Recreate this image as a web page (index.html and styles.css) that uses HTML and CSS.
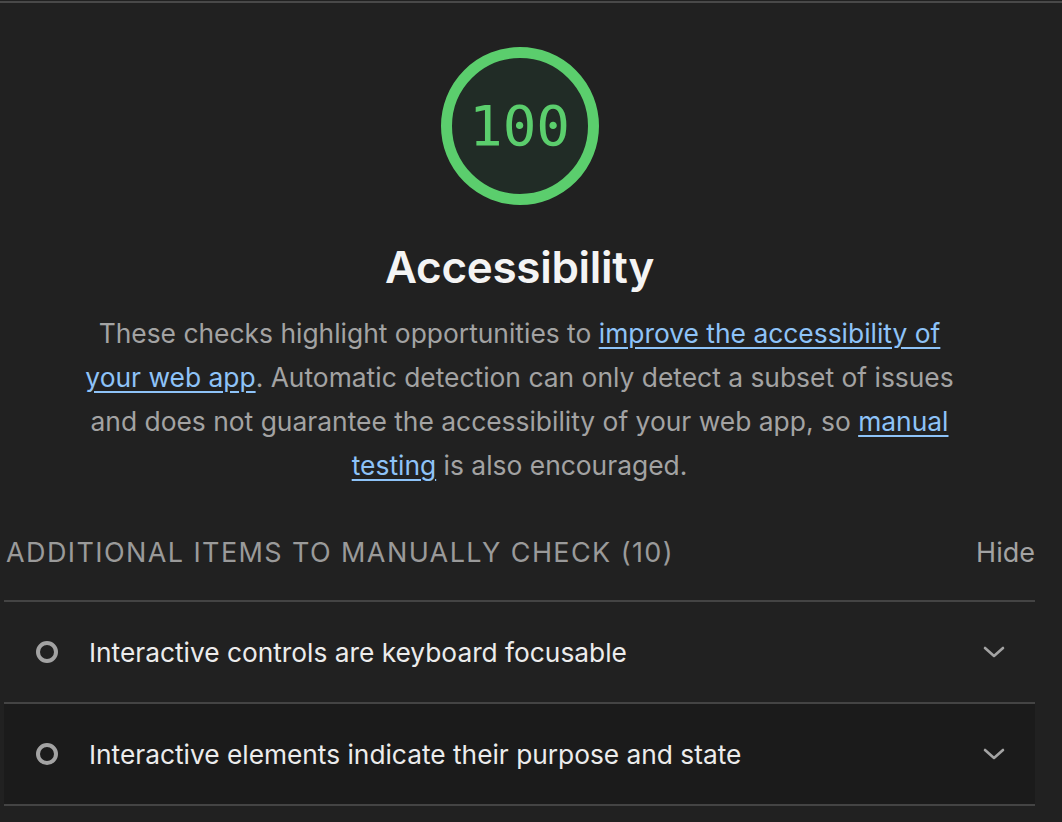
FILE: index.html
```html
<!DOCTYPE html>
<html lang="en">
<head>
<meta charset="utf-8">
<title>Accessibility</title>
<link rel="stylesheet" href="styles.css">
</head>
<body>
<div class="topline"></div>
<main class="category">
  <div class="gauge-wrap">
    <div class="gauge"><span class="gauge-value">100</span></div>
  </div>
  <h1 class="title">Accessibility</h1>
  <p class="desc">These checks highlight opportunities to <a href="#">improve the accessibility of your web app</a>. Automatic detection can only detect a subset of issues and does not guarantee the accessibility of your web app, so <a href="#">manual testing</a> is also encouraged.</p>
  <div class="group-head">
    <span class="group-title">Additional items to manually check (10)</span>
    <span class="group-toggle">Hide</span>
  </div>
  <div class="audits">
    <div class="audit">
      <span class="audit-icon"></span>
      <span class="audit-text">Interactive controls are keyboard focusable</span>
      <svg class="chev" width="22" height="12" viewBox="0 0 22 12"><path d="M2 2 L11 10 L20 2" fill="none" stroke="#a3a3a3" stroke-width="2.6" stroke-linecap="round" stroke-linejoin="round"/></svg>
    </div>
    <div class="audit alt">
      <span class="audit-icon"></span>
      <span class="audit-text">Interactive elements indicate their purpose and state</span>
      <svg class="chev" width="22" height="12" viewBox="0 0 22 12"><path d="M2 2 L11 10 L20 2" fill="none" stroke="#a3a3a3" stroke-width="2.6" stroke-linecap="round" stroke-linejoin="round"/></svg>
    </div>
  </div>
</main>
</body>
</html>
```
FILE: styles.css
```css
html, body {
  margin: 0;
  padding: 0;
  background: #212121;
  height: 100%;
  overflow: hidden;
}
body {
  font-family: Inter, "Noto Sans", sans-serif;
  padding-top: 1px;
}
.topline {
  height: 2px;
  background: #494949;
}
.category {
  width: 1031px;
  margin-left: 4px;
  display: flex;
  flex-direction: column;
  align-items: center;
}
.gauge-wrap {
  padding-top: 44px;
}
.gauge {
  width: 136px;
  height: 136px;
  border: 11px solid #5bce6d;
  border-radius: 50%;
  background: #212c26;
  display: flex;
  align-items: center;
  justify-content: center;
}
.gauge-value {
  font-family: "DejaVu Sans Mono", monospace;
  font-size: 56px;
  color: #5bce6d;
  line-height: 1;
}
.title {
  margin: 35px 0 0;
  font-size: 44px;
  font-weight: 600;
  color: #f4f4f4;
  line-height: 54px;
  letter-spacing: -0.3px;
}
.desc {
  margin: 17px 0 0;
  width: 880px;
  text-align: center;
  font-size: 26.4px;
  line-height: 44px;
  color: #a3a3a3;
}
.desc a {
  color: #8ec3f8;
  text-decoration: underline;
  text-underline-offset: 4px;
}
.group-head {
  align-self: stretch;
  display: flex;
  justify-content: space-between;
  align-items: center;
  margin-top: 34px;
  padding: 0 0 16px 2px;
  border-bottom: 2px solid #444;
  box-sizing: border-box;
  height: 81px;
}
.group-title {
  text-transform: uppercase;
  font-size: 27px;
  letter-spacing: 1.4px;
  color: #9a9a9a;
}
.group-toggle {
  font-size: 27px;
  color: #a3a3a3;
}
.audits {
  align-self: stretch;
}
.audit {
  display: flex;
  align-items: center;
  height: 102px;
  border-bottom: 2px solid #444;
  box-sizing: border-box;
  padding: 0 30px 0 32px;
}
.audit.alt {
  background: #1b1b1b;
}
.audit-icon {
  width: 14px;
  height: 14px;
  border: 4px solid #a3a3a3;
  border-radius: 50%;
  flex: none;
}
.audit-text {
  margin-left: 31px;
  font-size: 26.3px;
  color: #ececec;
  flex: 1;
}
.chev {
  flex: none;
}
```
